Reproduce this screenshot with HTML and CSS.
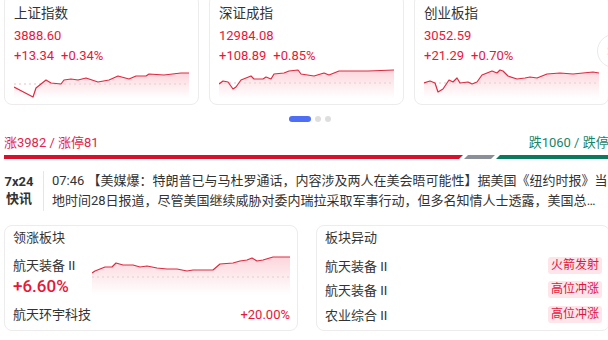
FILE: index.html
```html
<!DOCTYPE html>
<html lang="zh-CN">
    <head>
        <meta charset="UTF-8" />
        <meta name="viewport" content="width=device-width, initial-scale=1" />
        <title>行情</title>
        <link rel="stylesheet" href="styles.css">
    </head>
    <body>
        <svg class="defs" width="0" height="0">
            <defs>
                <linearGradient id="area" x1="0" y1="0" x2="0" y2="1">
                    <stop offset="0" stop-color="#f0324f" stop-opacity="0.2" />
                    <stop offset="1" stop-color="#f0324f" stop-opacity="0" />
                </linearGradient>
            </defs>
        </svg>

        <div class="page">
            <div class="index-row">
                <div class="index-card">
                    <div class="index-name">上证指数</div>
                    <div class="index-value">3888.60</div>
                    <div class="index-change"><span>+13.34</span><span>+0.34%</span></div>
                    <svg class="spark" width="175" height="29" viewBox="0 0 175 29">
                        <path class="fill" d="M0,18 L19,28 22,19 32,11 37,14 47,15 50,11 57,10 64,11 72,9 84,13 95,11 104,7 115,10 122,7 132,7 135,5 150,6 167,4 175,4 L175,29 L0,29 Z" />
                        <line class="base" x1="0" y1="15" x2="175" y2="15" />
                        <polyline class="line" points="0,18 19,28 22,19 32,11 37,14 47,15 50,11 57,10 64,11 72,9 84,13 95,11 104,7 115,10 122,7 132,7 135,5 150,6 167,4 175,4" />
                    </svg>
                </div>
                <div class="index-card">
                    <div class="index-name">深证成指</div>
                    <div class="index-value">12984.08</div>
                    <div class="index-change"><span>+108.89</span><span>+0.85%</span></div>
                    <svg class="spark" width="175" height="29" viewBox="0 0 175 29">
                        <path class="fill" d="M0,15 L4,12 9,13 14,20 17,18 22,11 32,7 35,10 44,10 47,8 52,10 55,5 65,4 70,2 79,1 82,5 95,7 105,4 110,6 120,2 134,2 149,2 175,1 L175,29 L0,29 Z" />
                        <line class="base" x1="0" y1="14" x2="175" y2="14" />
                        <polyline class="line" points="0,15 4,12 9,13 14,20 17,18 22,11 32,7 35,10 44,10 47,8 52,10 55,5 65,4 70,2 79,1 82,5 95,7 105,4 110,6 120,2 134,2 149,2 175,1" />
                    </svg>
                </div>
                <div class="index-card">
                    <div class="index-name">创业板指</div>
                    <div class="index-value">3052.59</div>
                    <div class="index-change"><span>+21.29</span><span>+0.70%</span></div>
                    <svg class="spark" width="175" height="29" viewBox="0 0 175 29">
                        <path class="fill" d="M0,14 L6,12 11,14 14,23 19,20 25,11 29,13 33,9 36,14 44,13 48,15 53,13 58,6 63,4 68,2 73,4 76,1 79,2 84,7 93,10 101,9 106,8 113,9 123,5 136,4 149,5 169,3 175,4 L175,29 L0,29 Z" />
                        <line class="base" x1="0" y1="14" x2="175" y2="14" />
                        <polyline class="line" points="0,14 6,12 11,14 14,23 19,20 25,11 29,13 33,9 36,14 44,13 48,15 53,13 58,6 63,4 68,2 73,4 76,1 79,2 84,7 93,10 101,9 106,8 113,9 123,5 136,4 149,5 169,3 175,4" />
                    </svg>
                </div>
                <div class="next-btn">›</div>
            </div>

            <div class="dots">
                <span class="dot active"></span>
                <span class="dot"></span>
                <span class="dot"></span>
            </div>

            <div class="breadth">
                <div class="breadth-text">
                    <span class="up">涨3982 / 涨停81</span>
                    <span class="down">跌1060 / 跌停6</span>
                </div>
                <div class="breadth-bar">
                    <span class="seg seg-up"></span>
                    <span class="seg seg-flat"></span>
                    <span class="seg seg-down"></span>
                </div>
            </div>

            <div class="news">
                <div class="news-label">7x24<br>快讯</div>
                <div class="news-text">07:46 【美媒爆：特朗普已与马杜罗通话，内容涉及两人在美会晤可能性】据美国《纽约时报》当地时间28日报道，尽管美国继续威胁对委内瑞拉采取军事行动，但多名知情人士透露，美国总统特朗普与委内瑞拉总统马杜罗上周进行了通话。</div>
            </div>

            <div class="panels">
                <div class="panel">
                    <div class="panel-title">领涨板块</div>
                    <div class="lead">
                        <div class="lead-info">
                            <div class="lead-name">航天装备 II</div>
                            <div class="lead-pct">+6.60%</div>
                        </div>
                        <svg class="lead-chart" width="198" height="39" viewBox="0 0 198 39">
                            <path class="fill" d="M0,17 L3,15 8,13 13,11 20,11 24,7 31,9 41,9 48,11 55,10 65,12 75,13 85,13 95,15 101,14 121,14 128,8 141,7 148,5 155,4 160,2 165,5 171,4 181,1 198,1 L198,39 L0,39 Z" />
                            <line class="base" x1="0" y1="21" x2="198" y2="21" />
                            <polyline class="line" points="0,17 3,15 8,13 13,11 20,11 24,7 31,9 41,9 48,11 55,10 65,12 75,13 85,13 95,15 101,14 121,14 128,8 141,7 148,5 155,4 160,2 165,5 171,4 181,1 198,1" />
                        </svg>
                    </div>
                    <div class="lead-stock">
                        <span>航天环宇科技</span>
                        <span class="red">+20.00%</span>
                    </div>
                </div>
                <div class="panel">
                    <div class="panel-title">板块异动</div>
                    <div class="move-row"><span>航天装备 II</span><span class="tag">火箭发射</span></div>
                    <div class="move-row"><span>航天装备 II</span><span class="tag">高位冲涨</span></div>
                    <div class="move-row"><span>农业综合 II</span><span class="tag">高位冲涨</span></div>
                </div>
            </div>
        </div>
    </body>
</html>
```

FILE: styles.css
```css
* {
  box-sizing: border-box;
}
html, body {
  overflow: hidden;
}
body {
  margin: 0;
  font-family: Roboto, "Noto Sans CJK SC", sans-serif;
  font-size: 13px;
  color: #333;
  background: #fff;
}
.defs {
  position: absolute;
}
.page {
  width: 620px;
  padding: 0 4px;
}

/* index cards */
.index-row {
  position: relative;
  display: flex;
  gap: 10px;
  margin-top: -6px;
}
.index-card {
  flex: 0 0 195px;
  border: 1px solid #ececec;
  border-radius: 8px;
  padding: 8px 9px 6px;
}
.index-name {
  font-size: 13.5px;
  line-height: 20px;
  color: #333;
}
.index-value {
  margin-top: 3px;
  line-height: 20px;
  color: #e5173a;
}
.index-change {
  line-height: 20px;
  color: #e5173a;
}
.index-change span + span {
  margin-left: 7px;
}
.spark {
  display: block;
  margin-top: 3px;
}
.fill {
  fill: url(#area);
}
.line {
  fill: none;
  stroke: #e0283f;
  stroke-width: 1.2;
  stroke-linejoin: round;
}
.base {
  stroke: #e9d9dc;
  stroke-width: 1.5;
  stroke-dasharray: 2 3;
}
.next-btn {
  position: absolute;
  left: 593px;
  top: 40px;
  width: 34px;
  height: 34px;
  border: 1px solid #eaeaea;
  border-radius: 50%;
  background: #fff;
  color: #f3ead6;
  font-size: 18px;
  line-height: 30px;
  padding-left: 8px;
}

/* pager */
.dots {
  display: flex;
  justify-content: center;
  gap: 4px;
  margin-top: 11px;
}
.dot {
  width: 6px;
  height: 6px;
  border-radius: 3px;
  background: #dedede;
}
.dot.active {
  width: 22px;
  background: #4d6ef5;
}

/* breadth */
.breadth {
  margin-top: 12px;
}
.breadth-text {
  display: flex;
  justify-content: space-between;
  line-height: 18px;
}
.up {
  color: #e3234c;
}
.down {
  color: #16866a;
}
.breadth-bar {
  display: flex;
  gap: 1px;
  height: 4px;
  margin-top: 3px;
}
.seg-up {
  width: 459px;
  background: #d8102c;
  clip-path: polygon(0 0, 100% 0, calc(100% - 4px) 100%, 0 100%);
}
.seg-flat {
  width: 31px;
  background: #8b8f98;
  clip-path: polygon(4px 0, 100% 0, calc(100% - 4px) 100%, 0 100%);
}
.seg-down {
  flex: 1;
  background: #0b7a5c;
  clip-path: polygon(4px 0, 100% 0, 100% 100%, 0 100%);
}

/* news */
.news {
  display: flex;
  align-items: flex-start;
  margin-top: 12px;
  padding-right: 8px;
}
.news-label {
  flex: 0 0 30px;
  margin-top: 2px;
  font-weight: bold;
  line-height: 17px;
  text-align: center;
  color: #333;
}
.news-text {
  flex: 1;
  margin-left: 9px;
  padding-left: 8px;
  border-left: 1px solid #e6e6e6;
  line-height: 20px;
  color: #333;
  display: -webkit-box;
  -webkit-box-orient: vertical;
  -webkit-line-clamp: 2;
  overflow: hidden;
}

/* bottom panels */
.panels {
  display: grid;
  grid-template-columns: 294px 294px;
  gap: 18px;
  margin-top: 14px;
}
.panel {
  border: 1px solid #ececec;
  border-radius: 8px;
  padding: 3px 7px 3px 8px;
}
.panel-title {
  line-height: 18px;
  color: #333;
}
.lead {
  display: flex;
  margin-top: 9px;
}
.lead-info {
  flex: 0 0 79px;
}
.lead-name {
  line-height: 18px;
  padding-top: 1px;
}
.lead-pct {
  font-size: 17px;
  font-weight: 500;
  line-height: 22px;
  color: #e5173a;
}
.lead-chart {
  display: block;
}
.lead-stock {
  display: flex;
  justify-content: space-between;
  margin-top: 9px;
  line-height: 18px;
}
.red {
  color: #e5173a;
}
.move-row {
  display: flex;
  justify-content: space-between;
  align-items: center;
  height: 24.5px;
}
.panel-title + .move-row {
  margin-top: 6px;
}
.tag {
  font-size: 12px;
  line-height: 17px;
  padding: 0 3px;
  border-radius: 3px;
  background: #fde5ea;
  color: #e0173c;
}
```
